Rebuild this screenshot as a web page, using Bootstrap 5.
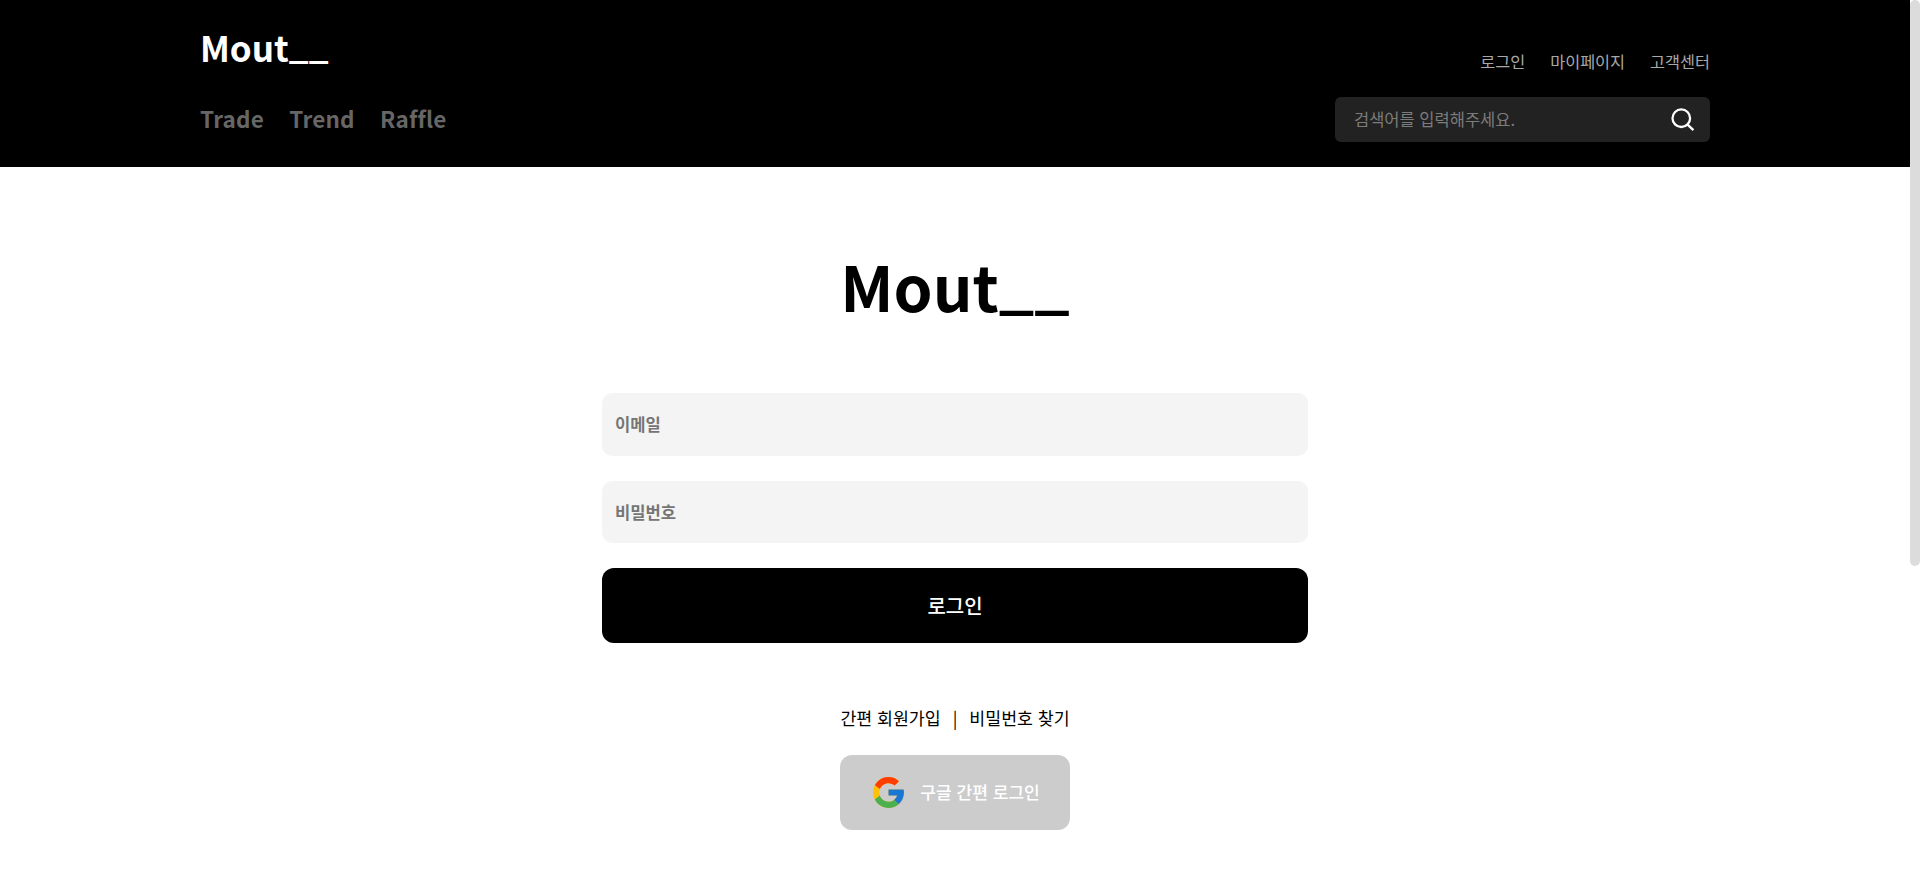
<!DOCTYPE html>
<html lang="ko">
<head>
<meta charset="utf-8">
<meta name="viewport" content="width=device-width, initial-scale=1">
<title>Mout__</title>
<link rel="stylesheet" href="https://cdn.jsdelivr.net/npm/bootstrap@5.3.0/dist/css/bootstrap.min.css">
<style>
  body { font-family: "Noto Sans CJK KR", sans-serif; color: #000; height: 880px; overflow: hidden; padding-right: 10px; line-height: 1.5; }
  a { color: inherit; text-decoration: none; }
  .site-header { height: 167px; padding: 0 200px; background: #000; }
  .brand { font-size: 35px; font-weight: 700; line-height: 52px; color: #fff; margin-top: 21px; }
  .blank { vertical-align: .09em; line-height: 1; }
  .menu { font-size: 22.5px; letter-spacing: .2px; font-weight: 700; line-height: 36px; gap: 25.3px; color: #666; margin-top: 27px; }
  .user-links { font-size: 16.3px; line-height: 24px; gap: 25px; color: #a8a8a8; margin-top: 49px; }
  .search-box { width: 375px; height: 45px; border-radius: 6px; background: #222; margin-top: 24px; padding: 0 15px 0 19px; }
  .search-box input { background: none; border: 0; padding: 0; font-size: 16.5px; color: #fff; outline: 0; }
  .search-box input::placeholder { color: #7c7c7c; opacity: 1; }
  .login-form { width: 706px; }
  .title { font-size: 62.5px; font-weight: 700; line-height: 94px; margin: 71px 0 61px; }
  .field { height: 63px; border: 0; border-radius: 10px; background: #f4f4f4; padding: 0 13px 1px; font-size: 16.6px; font-weight: 700; margin-bottom: 25px; }
  .field-short { height: 62px; }
  .field::placeholder { color: #757575; opacity: 1; }
  .btn-wide { height: 75px; border-radius: 12px; background: #000; color: #fff; font-size: 20px; font-weight: 500; border: 0; }
  .sub-links { font-size: 17.3px; line-height: 26px; margin-top: 62px; }
  .sep { margin: 0 12px; }
  .btn-google { width: 230px; height: 75px; border: 0; border-radius: 12px; background: #ccc; color: #fff; font-size: 17.1px; font-weight: 500; margin-top: 24px; padding: 0 0 1px; gap: 13px; white-space: nowrap; }
  .scroll-thumb { position: fixed; top: 0; right: 0; width: 10px; height: 566px; border-radius: 5px; background: #dcdcdc; }
</style>
</head>
<body>
<header class="site-header d-flex justify-content-between">
  <div>
    <a href="#" class="brand d-block">Mout<span class="blank">__</span></a>
    <nav class="menu d-flex"><a href="#">Trade</a><a href="#">Trend</a><a href="#">Raffle</a></nav>
  </div>
  <div class="d-flex flex-column align-items-end">
    <nav class="user-links d-flex"><a href="#">로그인</a><a href="#">마이페이지</a><a href="#">고객센터</a></nav>
    <div class="search-box d-flex align-items-center">
      <input class="flex-grow-1" type="text" placeholder="검색어를 입력해주세요.">
      <svg width="24" height="24" viewBox="0 0 24 24" fill="none" stroke="#fff" stroke-width="2.3"><circle cx="10.3" cy="10.2" r="8.8"/><path d="M16.6 16.6l5.8 5.6"/></svg>
    </div>
  </div>
</header>
<main class="d-flex flex-column align-items-center">
  <h1 class="title">Mout<span class="blank">__</span></h1>
  <form class="login-form">
    <input class="field d-block w-100" type="email" placeholder="이메일">
    <input class="field field-short d-block w-100" type="password" placeholder="비밀번호">
    <button class="btn btn-wide w-100" type="button">로그인</button>
  </form>
  <div class="sub-links d-flex"><a href="#">간편 회원가입</a><span class="sep">|</span><a href="#">비밀번호 찾기</a></div>
  <button class="btn btn-google d-flex align-items-center justify-content-center" type="button">
    <svg width="37" height="37" viewBox="0 0 48 48"><path fill="#FFC107" d="M43.611 20.083H42V20H24v8h11.303C33.654 32.657 29.223 36 24 36c-6.627 0-12-5.373-12-12s5.373-12 12-12c3.059 0 5.842 1.154 7.961 3.039l5.657-5.657C34.046 6.053 29.268 4 24 4 12.955 4 4 12.955 4 24s8.955 20 20 20 20-8.955 20-20c0-1.341-.138-2.65-.389-3.917z"/><path fill="#FF3D00" d="M6.306 14.691l6.571 4.819C14.655 15.108 18.961 12 24 12c3.059 0 5.842 1.154 7.961 3.039l5.657-5.657C34.046 6.053 29.268 4 24 4 16.318 4 9.656 8.337 6.306 14.691z"/><path fill="#4CAF50" d="M24 44c5.166 0 9.86-1.977 13.409-5.192l-6.19-5.238C29.211 35.091 26.715 36 24 36c-5.202 0-9.619-3.317-11.283-7.946l-6.522 5.025C9.505 39.556 16.227 44 24 44z"/><path fill="#1976D2" d="M43.611 20.083H42V20H24v8h11.303a12.04 12.04 0 0 1-4.087 5.571l6.193 5.238C36.971 39.205 44 34 44 24c0-1.341-.138-2.65-.389-3.917z"/></svg>
    <span>구글 간편 로그인</span>
  </button>
</main>
<div class="scroll-thumb"></div>
<script src="https://cdn.jsdelivr.net/npm/bootstrap@5.3.0/dist/js/bootstrap.bundle.min.js"></script>
</body>
</html>
